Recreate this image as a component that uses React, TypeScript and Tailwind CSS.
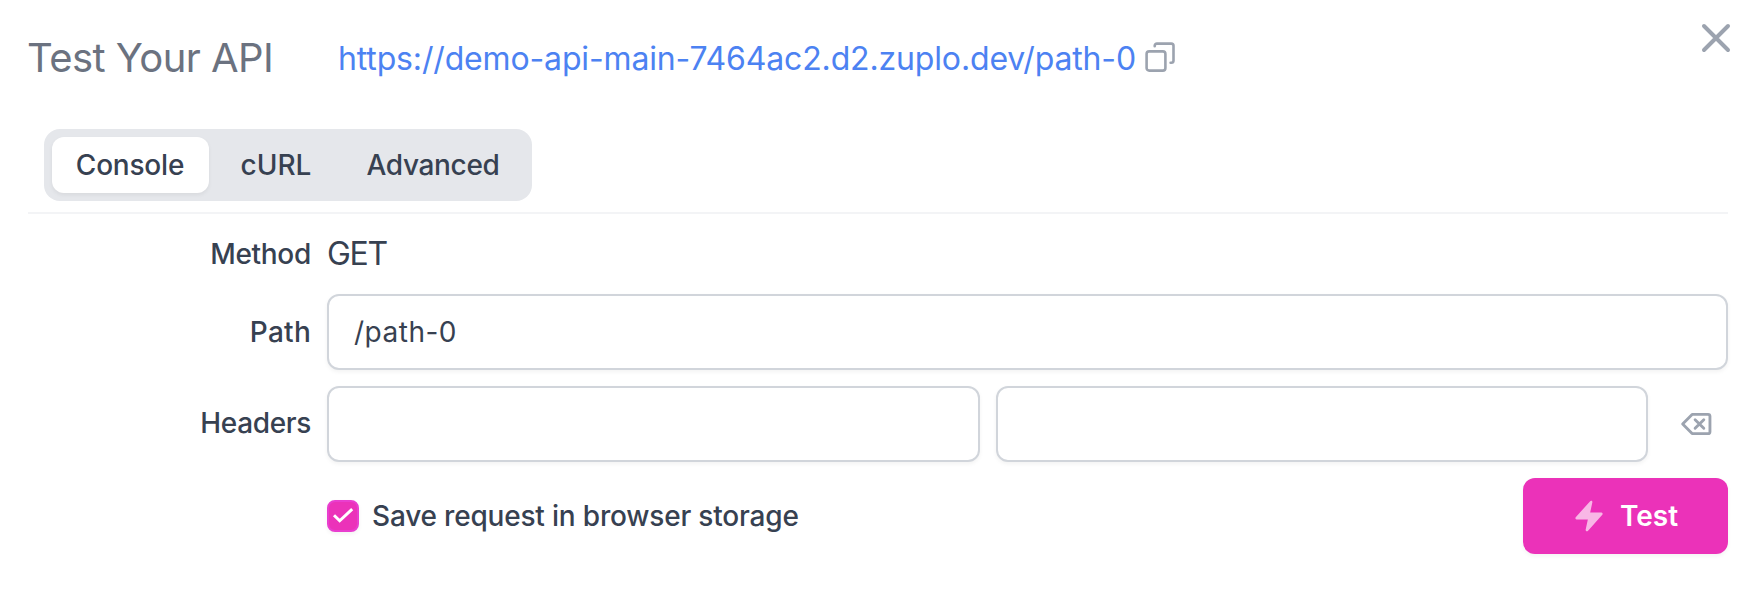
import type { ReactNode } from 'react';

const tabs = [
  { label: 'Console', className: 'w-[157px] rounded-xl bg-white pr-[1px] tracking-[-0.2px] shadow-[0_2px_4px_rgba(0,0,0,0.06)]' },
  { label: 'cURL', className: 'w-[133px] pl-[1px]' },
  { label: 'Advanced', className: 'w-[182px] tracking-[-0.35px]' },
];

function CloseIcon() {
  return (
    <svg className="size-12" viewBox="0 0 24 24" fill="none" stroke="currentColor" strokeWidth="2" strokeLinecap="round" strokeLinejoin="round">
      <path d="M6 18L18 6M6 6l12 12" />
    </svg>
  );
}

function CopyIcon() {
  return (
    <svg className="size-8" viewBox="0 0 32 32" fill="none" stroke="currentColor" strokeWidth="2.6" strokeLinecap="round" strokeLinejoin="round">
      <rect x="2.6" y="10.4" width="18.8" height="19.2" rx="2.6" />
      <path d="M10.7 5.2V4.8a2.2 2.2 0 0 1 2.2-2.2h14.4a2.2 2.2 0 0 1 2.2 2.2v14.8a2.2 2.2 0 0 1-2.2 2.2h-.7" />
    </svg>
  );
}

function BackspaceIcon() {
  return (
    <svg className="size-9" viewBox="0 0 24 24" fill="none" stroke="currentColor" strokeWidth="1.9" strokeLinecap="round" strokeLinejoin="round">
      <path d="M20 5.6a1.3 1.3 0 0 1 1.3 1.3v10.2a1.3 1.3 0 0 1-1.3 1.3H9.4L3.1 12l6.3-6.4z" />
      <path d="M11.4 9.1l5.8 5.8m0-5.8l-5.8 5.8" />
    </svg>
  );
}

function BoltIcon() {
  return (
    <svg className="size-[34px] text-white/65" viewBox="0 0 20 20" fill="currentColor">
      <path d="M11.983 1.907a.75.75 0 0 0-1.292-.657l-8.5 9.5A.75.75 0 0 0 2.75 12h6.572l-1.305 6.093a.75.75 0 0 0 1.292.657l8.5-9.5A.75.75 0 0 0 17.25 8h-6.572l1.305-6.093Z" />
    </svg>
  );
}

function Row({ label, labelClass, className, children }: { label: string; labelClass: string; className: string; children: ReactNode }) {
  return (
    <div className={`flex items-center ${className}`}>
      <div className={`w-[283px] text-right font-medium ${labelClass}`}>{label}</div>
      <div className="ml-4 flex flex-1 items-center">{children}</div>
    </div>
  );
}

const inputClass =
  'h-[76px] min-w-0 flex-1 rounded-xl border-2 border-[#d1d5db] bg-white px-[25px] text-[28px] tracking-[0.5px] shadow-[0_2px_4px_rgba(0,0,0,0.05)] outline-none';

export default function App() {
  return (
    <div className="flex h-[592px] w-full flex-col bg-white pr-[30px] pl-7 font-['Inter',sans-serif] text-[28px] leading-10 text-[#374151]">
      <header className="flex h-[129px] items-start">
        <h1 className="-ml-[1px] mt-[34px] w-[311px] text-[40px] leading-[48px] tracking-[-0.55px] text-[#6b7280]">Test Your API</h1>
        <a className="mt-[39px] w-[797px] text-[32px] tracking-[-0.15px] whitespace-nowrap text-[#4c82f2]">
          https://demo-api-main-7464ac2.d2.zuplo.dev/path-0
        </a>
        <button className="mt-[41px] ml-[9px] text-[#9ca3af]" aria-label="Copy URL">
          <CopyIcon />
        </button>
        <button className="mt-[14px] -mr-3 ml-auto text-[#9ca3af]" aria-label="Close">
          <CloseIcon />
        </button>
      </header>

      <div className="flex h-[85px] items-start border-b-2 border-[#f3f4f6] pl-4">
        <div className="flex h-[72px] items-center rounded-2xl bg-[#e5e7eb] px-2 font-medium">
          {tabs.map((tab) => (
            <button key={tab.label} className={`flex h-14 items-center justify-center ${tab.className}`}>
              {tab.label}
            </button>
          ))}
        </div>
      </div>

      <Row label="Method" labelClass="tracking-[-0.3px]" className="h-20">
        <span className="text-[32px] tracking-[-1.3px]">GET</span>
      </Row>
      <Row label="Path" labelClass="tracking-[0.25px]" className="">
        <input className={inputClass} defaultValue="/path-0" aria-label="Path" />
      </Row>
      <Row label="Headers" labelClass="-mt-[3px] tracking-[-0.35px]" className="mt-4">
        <input className={inputClass} aria-label="Header name" />
        <input className={`ml-4 ${inputClass}`} aria-label="Header value" />
        <button className="ml-[30px] mr-[14px] text-[#9ca3af]" aria-label="Remove header">
          <BackspaceIcon />
        </button>
      </Row>

      <div className="mt-4 flex h-[76px] items-center pl-[299px]">
        <span className="flex size-8 items-center justify-center rounded-lg border-2 border-[#e93ecf] bg-[#eb32b9] shadow-[0_2px_4px_rgba(0,0,0,0.05)]">
          <svg className="size-8 shrink-0" viewBox="0 0 32 32" fill="none" stroke="#fff" strokeWidth="3">
            <path d="M7 15.2l5.7 5.6L25.2 9.2" />
          </svg>
        </span>
        <span className="ml-[13px] font-medium tracking-[-0.19px]">Save request in browser storage</span>
        <button className="ml-auto flex h-[76px] w-[205px] items-center rounded-xl bg-[#eb32b9] pl-[49px] font-semibold text-white shadow-[0_2px_4px_rgba(0,0,0,0.05)]">
          <BoltIcon />
          <span className="ml-[14px]">Test</span>
        </button>
      </div>
    </div>
  );
}
